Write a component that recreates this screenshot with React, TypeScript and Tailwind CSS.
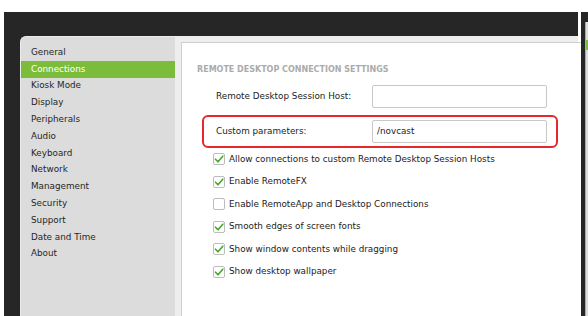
import type { FC } from "react";

const menuItems = [
  "General",
  "Connections",
  "Kiosk Mode",
  "Display",
  "Peripherals",
  "Audio",
  "Keyboard",
  "Network",
  "Management",
  "Security",
  "Support",
  "Date and Time",
  "About",
];

const options = [
  { label: "Allow connections to custom Remote Desktop Session Hosts", checked: true },
  { label: "Enable RemoteFX", checked: true },
  { label: "Enable RemoteApp and Desktop Connections", checked: false },
  { label: "Smooth edges of screen fonts", checked: true },
  { label: "Show window contents while dragging", checked: true },
  { label: "Show desktop wallpaper", checked: true },
];

const Checkbox: FC<{ checked: boolean }> = ({ checked }) => (
  <div className="w-[12px] h-[12px] shrink-0 rounded-[2px] border border-[#bdbdbd] bg-white flex items-center justify-center">
    {checked && (
      <svg width="10" height="10" viewBox="0 0 10 10">
        <path
          d="M1.5 5.2 L4 7.8 L8.8 2.2"
          fill="none"
          stroke="#45a82a"
          strokeWidth="1.6"
          strokeLinecap="round"
          strokeLinejoin="round"
        />
      </svg>
    )}
  </div>
);

const FieldRow: FC<{ label: string; value?: string; highlight?: boolean }> = ({
  label,
  value,
  highlight,
}) => (
  <div
    className={`w-[356px] h-[33px] rounded-[6px] border-2 flex items-center pl-[12px] pr-[9px] ${
      highlight ? "border-[#e8262b]" : "border-transparent"
    }`}
  >
    <span className="w-[156px] shrink-0">{label}</span>
    <div className="w-[175px] h-[23px] rounded-[2px] border border-[#c8c8c8] bg-white flex items-center pl-[4px]">
      {value}
    </div>
  </div>
);

export default function App() {
  return (
    <div
      className="w-[588px] h-[316px] bg-white overflow-hidden flex flex-col text-[8.8px] text-[#222]"
      style={{ fontFamily: '"DejaVu Sans", Verdana, sans-serif' }}
    >
      <div className="h-[12px] shrink-0" />
      <div className="flex flex-1">
        <div className="w-[4px] shrink-0" />

        {/* main window */}
        <div className="w-[574px] shrink-0 bg-[#262626] flex flex-col">
          <div className="h-[24px] shrink-0" />
          <div className="flex flex-1">
            <div className="w-[16px] shrink-0" />

            {/* sidebar */}
            <div className="w-[155px] shrink-0 bg-[#dcdcdc] rounded-tl-[6px] border-l border-t border-[#ececec] pt-[7px]">
              {menuItems.map((item) => (
                <div
                  key={item}
                  className={`h-[16.8px] flex items-center pl-[10px] ${
                    item === "Connections" ? "bg-[#7bbd3a] text-white" : "text-[#262626]"
                  }`}
                >
                  {item}
                </div>
              ))}
            </div>

            {/* settings area */}
            <div className="flex-1 bg-[#eeeeee] pl-[6px] pt-[6px] flex">
              <div className="flex-1 bg-white border-l border-t border-[#cfcfcf] -mr-[3px]">
                <div className="pl-[15px] pt-[22px] text-[8px] font-bold text-[#ababab] leading-[10px]">
                  REMOTE DESKTOP CONNECTION SETTINGS
                </div>
                <div className="pl-[20px] pt-[5px] flex flex-col gap-[2px]">
                  <FieldRow label="Remote Desktop Session Host:" />
                  <FieldRow label="Custom parameters:" value="/novcast" highlight />
                </div>
                <div className="pl-[31px] flex flex-col">
                  {options.map((o) => (
                    <div key={o.label} className="h-[22.5px] flex items-center gap-[4px]">
                      <Checkbox checked={o.checked} />
                      <span>{o.label}</span>
                    </div>
                  ))}
                </div>
              </div>
            </div>
          </div>
        </div>

        <div className="w-[3px] shrink-0" />

        {/* neighbouring window edge */}
        <div className="w-[7px] shrink-0 bg-[#262626] pt-[10px] pl-[4px] flex">
          <div className="flex-1 bg-[#dcdcdc] border-l border-[#aaaaaa] pt-[18px]">
            <div className="h-[10px] bg-[#7bbd3a]" />
          </div>
        </div>
      </div>
    </div>
  );
}
